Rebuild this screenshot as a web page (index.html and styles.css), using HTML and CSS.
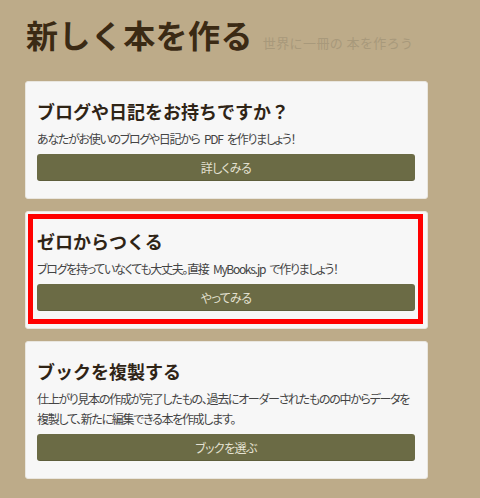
FILE: index.html
```html
<!DOCTYPE html>
<html lang="ja">
<head>
<meta charset="utf-8">
<title>新しく本を作る</title>
<link rel="stylesheet" href="styles.css">
</head>
<body>
<div class="page">
  <header class="page-header">
    <h1 class="title">新しく本を作る</h1><span class="subtitle">世界に一冊の 本を作ろう</span>
  </header>
  <section class="card">
    <h2 class="card-title">ブログや日記をお持ちですか？</h2>
    <p class="card-text">あなたがお使いのブログや日記から PDF を作りましょう！</p>
    <a class="btn" href="#">詳しくみる</a>
  </section>
  <section class="card card-highlight">
    <h2 class="card-title">ゼロからつくる</h2>
    <p class="card-text">ブログを持っていなくても大丈夫。直接 MyBooks.jp で作りましょう！</p>
    <a class="btn" href="#">やってみる</a>
    <div class="highlight-frame"></div>
  </section>
  <section class="card">
    <h2 class="card-title">ブックを複製する</h2>
    <p class="card-text">仕上がり見本の作成が完了したもの、過去にオーダーされたものの中からデータを複製して、新たに編集できる本を作成します。</p>
    <a class="btn" href="#">ブックを選ぶ</a>
  </section>
</div>
</body>
</html>
```

FILE: styles.css
```css
html, body {
  margin: 0;
  padding: 0;
}
body {
  background: #bdab89;
  font-family: "Noto Sans CJK JP", "Noto Sans", sans-serif;
  color: #3a3a3a;
}
.page {
  width: 403px;
  margin-left: 25px;
  padding-top: 14px;
  display: flex;
  flex-direction: column;
  gap: 12px;
}
.page-header {
  display: flex;
  align-items: baseline;
  margin-bottom: 15px;
}
.title {
  margin: 0;
  font-size: 32px;
  line-height: 40px;
  font-weight: 700;
  color: #3b2a14;
  padding-left: 1px;
  letter-spacing: 0.4px;
}
.subtitle {
  margin-left: 10px;
  font-size: 13px;
  letter-spacing: 0.4px;
  color: #a8997b;
  white-space: nowrap;
}
.card {
  position: relative;
  background: #f7f7f7;
  border: 1px solid #e9e6df;
  border-radius: 3px;
  padding: 17px 12px 17px 11px;
  display: flex;
  flex-direction: column;
}
.card-title {
  margin: 0 0 6px;
  font-size: 18px;
  line-height: 24px;
  font-weight: 700;
  color: #2f2416;
}
.card-text {
  margin: 0 0 5px;
  font-size: 12px;
  line-height: 20px;
  color: #444;
  font-feature-settings: "palt";
  letter-spacing: -1.3px;
  word-spacing: 3px;
}
.btn {
  display: flex;
  align-items: center;
  justify-content: center;
  height: 27px;
  background: #6b6b45;
  border-radius: 3px;
  box-shadow: inset 0 -1px 0 rgba(0,0,0,0.12);
  color: #e4e1d2;
  font-size: 12px;
  text-decoration: none;
  font-feature-settings: "palt";
  letter-spacing: -0.6px;
}
.highlight-frame {
  position: absolute;
  top: 2px;
  left: 2px;
  right: 4px;
  bottom: 4px;
  border: 5px solid #ff0000;
  pointer-events: none;
}
```
